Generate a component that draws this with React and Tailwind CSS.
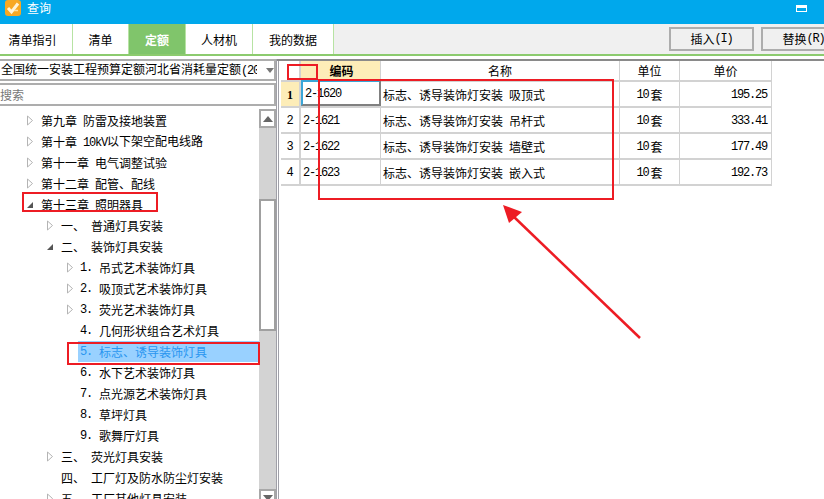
import React from 'react';

const FONT = "font-['Noto_Sans_CJK_SC',sans-serif]";

const tabs = [
    { label: '清单指引', width: 'w-[73px] pr-[7px]' },
    { label: '清单', width: 'w-[56px]' },
    { label: '定额', width: 'w-[57px]', active: true },
    { label: '人材机', width: 'w-[67px]' },
    { label: '我的数据', width: 'w-[81px]' },
];

const treeRows = [
    { level: 1, arrow: 'closed', text: '第九章', name: '防雷及接地装置' },
    { level: 1, arrow: 'closed', text: '第十章', name: '10kV以下架空配电线路' },
    { level: 1, arrow: 'closed', text: '第十一章', name: '电气调整试验' },
    { level: 1, arrow: 'closed', text: '第十二章', name: '配管、配线' },
    { level: 1, arrow: 'open', text: '第十三章', name: '照明器具' },
    { level: 2, arrow: 'closed', text: '一、', name: '普通灯具安装' },
    { level: 2, arrow: 'open', text: '二、', name: '装饰灯具安装' },
    { level: 3, arrow: 'closed', text: '1.', name: '吊式艺术装饰灯具' },
    { level: 3, arrow: 'closed', text: '2.', name: '吸顶式艺术装饰灯具' },
    { level: 3, arrow: 'closed', text: '3.', name: '荧光艺术装饰灯具' },
    { level: 3, text: '4.', name: '几何形状组合艺术灯具' },
    { level: 3, text: '5.', name: '标志、诱导装饰灯具', selected: true },
    { level: 3, text: '6.', name: '水下艺术装饰灯具' },
    { level: 3, text: '7.', name: '点光源艺术装饰灯具' },
    { level: 3, text: '8.', name: '草坪灯具' },
    { level: 3, text: '9.', name: '歌舞厅灯具' },
    { level: 2, arrow: 'closed', text: '三、', name: '荧光灯具安装' },
    { level: 2, text: '四、', name: '工厂灯及防水防尘灯安装' },
    { level: 2, arrow: 'closed', text: '五、', name: '工厂其他灯具安装' },
];

const tableRows = [
    { no: 1, code: '2-1620', name: '吸顶式', price: '195.25' },
    { no: 2, code: '2-1621', name: '吊杆式', price: '333.41' },
    { no: 3, code: '2-1622', name: '墙壁式', price: '177.49' },
    { no: 4, code: '2-1623', name: '嵌入式', price: '192.73' },
];

// half width latin, 6px advance like the bitmap song face
const Latin = ({ children, className = '' }) => (
    <span className={`font-['Liberation_Mono',monospace] text-xs tracking-[-1.2px] ${className}`}>{children}</span>
);

const TreeArrow = ({ type }) => {
    if (type === 'open') {
        return (
            <svg width="8" height="8" viewBox="0 0 8 8" className="shrink-0">
                <path d="M1 7 L7 7 L7 1 Z" fill="#555555" />
            </svg>
        );
    }
    if (type === 'closed') {
        return (
            <svg width="8" height="11" viewBox="0 0 8 11" className="shrink-0">
                <path d="M1.5 1 L6.5 5.5 L1.5 10 Z" fill="#ffffff" stroke="#b4b4b4" />
            </svg>
        );
    }
    return <span className="w-2 shrink-0" />;
};

const TreeRow = ({ row }) => {
    if (row.level === 1) {
        return (
            <div className="flex h-[21px] items-center pl-[26px] whitespace-nowrap">
                <TreeArrow type={row.arrow} />
                <span className="ml-[7px]">{row.text}</span>
                <span className="ml-[6px]">
                    {row.name.startsWith('10kV') ? (
                        <>
                            <Latin>10kV</Latin>以下架空配电线路
                        </>
                    ) : row.name}
                </span>
            </div>
        );
    }
    if (row.level === 2) {
        return (
            <div className="flex h-[21px] items-center pl-[46px] whitespace-nowrap">
                <TreeArrow type={row.arrow} />
                <span className="ml-[7px] w-[30px]">{row.text}</span>
                <span>{row.name}</span>
            </div>
        );
    }
    return (
        <div className="flex h-[21px] items-center pl-[66px] whitespace-nowrap">
            <TreeArrow type={row.arrow} />
            <div className={`ml-[4px] flex h-[21px] flex-1 items-center pl-[2px] ${row.selected ? 'bg-[#99d1ff] text-[#2a96f0]' : ''}`}>
                <Latin className="w-[18px]">{row.text}</Latin>
                <span className="ml-px">{row.name}</span>
            </div>
        </div>
    );
};

const App = () => {
    return (
        <div className={`relative flex h-[499px] w-[824px] flex-col overflow-hidden bg-white text-xs text-black ${FONT}`}>
            {/* title bar */}
            <div className="flex h-6 shrink-0 items-start bg-[#00a8ec] pl-[5px] pr-[17px]">
                <svg width="16" height="16" viewBox="0 0 16 16" className="shrink-0">
                    <rect width="16" height="16" rx="3" fill="#f7a823" />
                    <path d="M3 8 L6.5 12 L13 3.5" fill="none" stroke="#fff3d6" strokeWidth="3" />
                    <path d="M9 10.5 L13 10.5" stroke="#fde0a0" strokeWidth="1.5" />
                </svg>
                <span className="ml-[6px] text-white leading-4">查询</span>
                <span className="ml-auto mt-[5px] h-[7px] w-[11px] border border-t-[3px] border-white" />
            </div>

            {/* tabs */}
            <div className="flex h-8 shrink-0 border-b-2 border-[#8ccb6e] bg-[#f0f0f0]">
                {tabs.map(tab => (
                    <div
                        key={tab.label}
                        className={`flex items-center justify-center border-r border-[#b7e3a3] pt-[2px] ${tab.width} ${tab.active ? 'bg-[#80c56b] font-bold text-white' : 'bg-white'}`}
                    >
                        {tab.label}
                    </div>
                ))}
                <div className="ml-auto flex gap-[7px] pt-[3px]">
                    <div className="flex h-6 w-[85px] items-center justify-center border-2 border-[#adadad]">
                        插入<Latin>(I)</Latin>
                    </div>
                    <div className="flex h-6 w-[85px] -mr-[22px] items-center justify-center border-2 border-[#adadad]">
                        替换<Latin>(R)</Latin>
                    </div>
                </div>
            </div>
            <div className="h-[5px] shrink-0 border-b-2 border-[#8a8a8a]" />

            <div className="flex min-h-0 flex-1">
                {/* left panel */}
                <div className="-mt-[2px] flex w-[277px] shrink-0 flex-col border-r border-[#a0a0a8] bg-white">
                    <div className="flex h-[22px] shrink-0 items-center border-2 border-l-0 border-[#adadad] pl-px">
                        <span className="w-[256px] overflow-hidden whitespace-nowrap">全国统一安装工程预算定额河北省消耗量定额<Latin>(20</Latin></span>
                        <svg width="8" height="5" viewBox="0 0 8 5" className="ml-[9px]">
                            <path d="M0 0 L8 0 L4 5 Z" fill="#777777" />
                        </svg>
                    </div>
                    <div className="mt-[2px] flex h-[23px] shrink-0 items-center border-2 border-l-0 border-[#adadad] text-[#777777]">
                        搜索
                    </div>
                    <div className="flex min-h-0 flex-1 overflow-hidden">
                        <div className="min-w-0 flex-1 overflow-hidden pt-[4px]">
                            {treeRows.map(row => (
                                <TreeRow key={row.text + row.name} row={row} />
                            ))}
                        </div>
                        {/* scrollbar */}
                        <div className="mt-[3px] flex w-[17px] shrink-0 flex-col bg-[#d3d3d3]">
                            <div className="flex h-[19px] shrink-0 items-center justify-center border-2 border-[#a8a8a8] bg-white">
                                <svg width="10" height="6" viewBox="0 0 10 6">
                                    <path d="M5 0 L10 6 L0 6 Z" fill="#666666" />
                                </svg>
                            </div>
                            <div className="mt-[71px] h-[132px] shrink-0 border-2 border-[#a0a0a0] bg-white" />
                            <div className="mt-auto flex h-[10px] items-start justify-center overflow-hidden border-2 border-b-0 border-[#a8a8a8] bg-white pt-[4px]">
                                <svg width="10" height="6" viewBox="0 0 10 6" className="shrink-0">
                                    <path d="M0 0 L10 0 L5 6 Z" fill="#666666" />
                                </svg>
                            </div>
                        </div>
                    </div>
                </div>

                {/* price table */}
                <div className="ml-px flex-1 border-l border-[#a0a0a8] pl-[2px]">
                    <div className="grid w-[491px] grid-cols-[20px_80px_239px_60px_92px] border-b-2 border-[#d2d2d2]">
                        <div className="h-[19px] border-r-2 border-[#d2d2d2]" />
                        <div className="flex h-[19px] items-center justify-center border-r border-[#d2d2d2] bg-[#fdedb8] pl-[2px] font-bold">编码</div>
                        <div className="flex h-[19px] items-center justify-center border-r border-[#d2d2d2]">名称</div>
                        <div className="flex h-[19px] items-center justify-center border-r border-[#d2d2d2]">单位</div>
                        <div className="flex h-[19px] items-center justify-center border-r border-[#d2d2d2]">单价</div>
                        {tableRows.map((row, i) => (
                            <React.Fragment key={row.no}>
                                <div className={`flex h-[26px] items-center justify-center border-t-2 border-r-2 border-[#d2d2d2] pt-px text-xs ${i === 0 ? "bg-[#fdedb8] font-['Liberation_Serif',serif] font-bold" : "font-['Liberation_Mono',monospace]"}`}>
                                    {row.no}
                                </div>
                                <div className={`flex h-[26px] items-center pl-[2px] pt-[2px] ${i === 0 ? 'border-2 border-l-[#3aa6d8] border-t-[#3aa6d8] border-r-[#808080] border-b-[#808080]' : 'border-t-2 border-r border-[#d2d2d2]'}`}>
                                    <Latin>{row.code}</Latin>
                                </div>
                                <div className="flex h-[26px] items-center border-t-2 border-r border-[#d2d2d2] pl-[2px] pt-px whitespace-nowrap">
                                    标志、诱导装饰灯安装<span className="ml-[6px]">{row.name}</span>
                                </div>
                                <div className="flex h-[26px] items-center justify-center border-t-2 border-r border-[#d2d2d2] pt-px">
                                    <Latin className="mr-[2px]">10</Latin>套
                                </div>
                                <div className="flex h-[26px] items-center justify-end border-t-2 border-r border-[#d2d2d2] pr-[4px] pt-[2px]">
                                    <Latin>{row.price}</Latin>
                                </div>
                            </React.Fragment>
                        ))}
                    </div>
                </div>
            </div>

            {/* red annotations drawn over the screenshot */}
            <div className="absolute left-[287px] top-[64px] h-[16px] w-[31px] border-2 border-[#ed1c24]" />
            <div className="absolute left-[318px] top-[79px] h-[121px] w-[296px] border-2 border-[#ed1c24]" />
            <div className="absolute left-[22px] top-[192px] h-[20px] w-[136px] border-2 border-[#ed1c24]" />
            <div className="absolute left-[67px] top-[342px] h-[23px] w-[193px] border-2 border-[#ed1c24]" />
            <svg width="824" height="499" viewBox="0 0 824 499" className="absolute left-0 top-0 pointer-events-none">
                <path d="M640 338 L513 216" stroke="#ed1c24" strokeWidth="2.5" fill="none" />
                <path d="M503 205 L522 212 L509 223 Z" fill="#ed1c24" />
            </svg>
        </div>
    );
};

export default App;
